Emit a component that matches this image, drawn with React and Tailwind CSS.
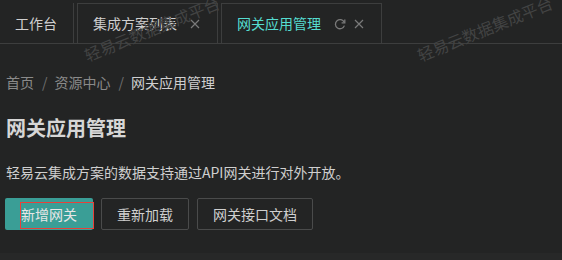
import React from "react";

const font = { fontFamily: '"Noto Sans CJK SC", "Noto Sans", sans-serif' };

function CloseIcon() {
  return (
    <svg width="10" height="10" viewBox="0 0 10 10" className="block">
      <path d="M1 1 L9 9 M9 1 L1 9" stroke="#7a7a7a" strokeWidth="1.2" fill="none" />
    </svg>
  );
}

function RefreshIcon() {
  return (
    <svg width="12" height="12" viewBox="0 0 12 12" className="block">
      <path d="M10.2 4.2 A4.6 4.6 0 1 0 10.4 7.6" stroke="#7a7a7a" strokeWidth="1.3" fill="none" />
      <path d="M10.8 1.6 L10.8 4.8 L7.6 4.8" stroke="#7a7a7a" strokeWidth="1.3" fill="none" />
    </svg>
  );
}

function Watermark({ left }) {
  return (
    <div
      className="absolute pointer-events-none whitespace-nowrap text-[16px] leading-none text-[#424343] origin-top-left"
      style={{ left, top: 48, transform: "rotate(-22deg)" }}
    >
      轻易云数据集成平台
    </div>
  );
}

export default function App() {
  return (
    <div className="relative w-[562px] h-[260px] overflow-hidden bg-[#232424] text-[#cfcfcf]" style={font}>
      {/* tab bar */}
      <div className="flex items-end h-[44px] border-b border-[#3d3e3e] gap-[3px]">
        <div className="flex items-center h-[40px] pl-[15px] pr-[16px] border-r border-[#3d3e3e] text-[14px] text-[#cfcfcf]">
          工作台
        </div>
        <div className="flex items-center h-[40px] pl-[15px] pr-[17px] border border-b-0 border-[#3d3e3e] text-[14px] text-[#cfcfcf] gap-[13px]">
          <span>集成方案列表</span>
          <CloseIcon />
        </div>
        <div className="flex items-center h-[40px] pl-[15px] pr-[17px] border border-b-0 border-[#3d3e3e] text-[14px] gap-[13px]">
          <span className="text-[#55dcd0]">网关应用管理</span>
          <div className="flex items-center gap-[8px]">
            <RefreshIcon />
            <CloseIcon />
          </div>
        </div>
      </div>

      {/* content */}
      <div className="pl-[6px] pt-[28px]">
        <div className="flex items-center h-[20px] text-[14px] leading-[20px]">
          <span className="text-[#8a8a8a]">首页</span>
          <span className="text-[#6f6f6f] ml-[8px] mr-[7px]">/</span>
          <span className="text-[#8a8a8a]">资源中心</span>
          <span className="text-[#6f6f6f] ml-[8px] mr-[7px]">/</span>
          <span className="text-[#cfcfcf]">网关应用管理</span>
        </div>
        <div className="mt-[22px] h-[28px] text-[20px] leading-[28px] font-bold text-[#d6d6d6]">网关应用管理</div>
        <div className="mt-[20px] h-[20px] text-[14px] leading-[20px] text-[#cfcfcf]">
          轻易云集成方案的数据支持通过API网关进行对外开放。
        </div>
        <div className="mt-[16px] flex gap-[8px] -ml-[1px]">
          <div className="relative flex items-center h-[32px] px-[16px] rounded-[2px] bg-[#3a9e96] text-[14px] text-[#e6e6e6]">
            新增网关
            <div className="absolute left-[15px] top-[4px] w-[74px] h-[27px] border border-[#e8413a]" />
          </div>
          <div className="flex items-center h-[32px] px-[15px] rounded-[2px] border border-[#4a4b4b] text-[14px] text-[#cfcfcf]">
            重新加载
          </div>
          <div className="flex items-center h-[32px] px-[15px] rounded-[2px] border border-[#4a4b4b] text-[14px] text-[#cfcfcf]">
            网关接口文档
          </div>
        </div>
      </div>

      <div className="absolute left-0 right-0 bottom-0 h-[7px] bg-[#272828]" />

      <Watermark left={82} />
      <Watermark left={415} />
    </div>
  );
}
